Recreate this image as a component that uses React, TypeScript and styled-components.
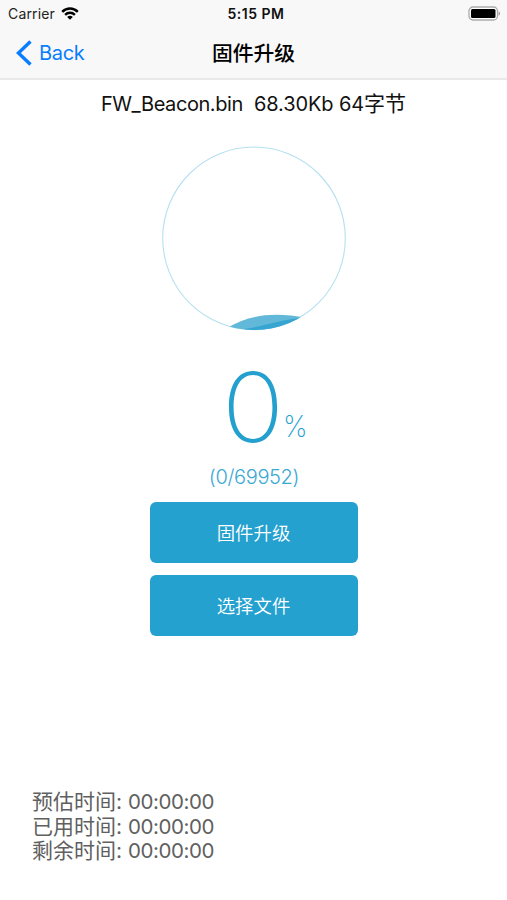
import React from "react";
import styled, { createGlobalStyle } from "styled-components";

const GlobalStyle = createGlobalStyle`
  * { box-sizing: border-box; }
  body {
    margin: 0;
    background: #fff;
    font-family: Inter, "Noto Sans CJK SC", sans-serif;
    color: #111;
  }
`;

const Screen = styled.div`
  width: 507px;
  height: 900px;
  display: flex;
  flex-direction: column;
  overflow: hidden;
  background: #fff;
`;

const Header = styled.header`
  height: 80px;
  flex: none;
  background: #f8f8f8;
  border-bottom: 2px solid #e9e9e9;
`;

const StatusBar = styled.div`
  height: 27px;
  display: grid;
  grid-template-columns: 1fr auto 1fr;
  align-items: center;
  padding: 0 6px 0 8px;
  font-size: 14px;
  line-height: 26px;
`;

const Carrier = styled.div`
  display: flex;
  align-items: center;
  gap: 6px;
  color: #222;
  letter-spacing: 0.15px;
`;

const Clock = styled.div`
  font-weight: 600;
  font-size: 14px;
  padding-left: 3px;
  letter-spacing: 0.5px;
`;

const BatteryIcon = styled.svg`
  justify-self: end;
`;

const NavBar = styled.nav`
  height: 51px;
  display: grid;
  grid-template-columns: 1fr auto 1fr;
  align-items: center;
  padding: 0 16px;
`;

const BackButton = styled.button`
  display: flex;
  align-items: center;
  gap: 6px;
  border: 0;
  padding: 0;
  background: none;
  color: #087dff;
  font: 400 20px/26px Inter, sans-serif;
  letter-spacing: -0.3px;
`;

const Title = styled.h1`
  margin: 0;
  padding-top: 2px;
  font-size: 20.8px;
  font-weight: 500;
  line-height: 28px;
  color: #000;
`;

const Main = styled.main`
  flex: 1;
  display: flex;
  flex-direction: column;
  align-items: center;
`;

const FileInfo = styled.div`
  margin-top: 10px;
  height: 28px;
  font-size: 20px;
  line-height: 28px;
  letter-spacing: -0.1px;
  white-space: pre;
`;

const FileName = styled.span`
  letter-spacing: -0.42px;
`;

const Unit = styled.span`
  font-size: 21px;
  letter-spacing: 0;
`;

const Gauge = styled.svg`
  margin-top: 28px;
  flex: none;
`;

const Percent = styled.div`
  display: flex;
  align-items: baseline;
  justify-content: center;
  height: 110px;
  margin-top: 21px;
  padding-left: 25px;
  line-height: 110px;
  color: #23a0cd;
`;

const PercentValue = styled.span`
  font-size: 96px;
  font-weight: 200;
  transform: scaleX(1.07);
`;

const PercentSign = styled.span`
  position: relative;
  top: -5px;
  font-size: 30px;
  font-weight: 200;
  transform: scaleX(0.92);
`;

const Bytes = styled.div`
  height: 28px;
  margin-top: 1px;
  padding-left: 1px;
  font-size: 20px;
  font-weight: 300;
  line-height: 28px;
  letter-spacing: -0.35px;
  color: #3ba9d2;
`;

const Actions = styled.div`
  display: flex;
  flex-direction: column;
  gap: 12px;
  margin-top: 11px;
`;

const ActionButton = styled.button`
  width: 208px;
  height: 61px;
  border: 0;
  border-radius: 6px;
  padding: 0;
  background: #24a1cf;
  color: #fff;
  font: 350 18.4px/28px Inter, "Noto Sans CJK SC", sans-serif;
`;

const Timings = styled.dl`
  align-self: flex-start;
  margin: auto 0 36px 32px;
  font-size: 20.5px;
  line-height: 24.6px;
  color: #606060;
`;

const TimingRow = styled.div`
  display: flex;
  align-items: baseline;
  height: 24.6px;
  gap: 6px;
`;

const TimingLabel = styled.dt`
  font-size: 21px;
  white-space: nowrap;
`;

const TimingValue = styled.dd`
  margin: 0;
  letter-spacing: -0.42px;
`;

const timings = [
  ["预估时间:", "00:00:00"],
  ["已用时间:", "00:00:00"],
  ["剩余时间:", "00:00:00"],
];

export default function App() {
  return (
    <Screen>
      <GlobalStyle />
      <Header>
        <StatusBar>
          <Carrier>
            <span>Carrier</span>
            <svg width="18" height="13" viewBox="0 0 18 13">
              <g fill="none" stroke="#000" strokeWidth="2.4">
                <path d="M1.2 4.9C5.6.4 12.4.4 16.8 4.9" />
                <path d="M4.1 7.8c2.8-2.7 7-2.7 9.8 0" />
              </g>
              <path d="M6.2 9.9c1.6-1.4 4-1.4 5.6 0L9 12.7z" />
            </svg>
          </Carrier>
          <Clock>5:15 PM</Clock>
          <BatteryIcon width="33" height="16" viewBox="0 0 33 16">
            <rect x="1" y="1" width="28.5" height="13" rx="4" fill="#fff" stroke="#aaa" strokeWidth="1.3" />
            <rect x="3" y="3" width="24.5" height="9" rx="1.5" />
            <path d="M30.6 5.2c1.9.8 1.9 3.8 0 4.6z" fill="#999" />
          </BatteryIcon>
        </StatusBar>
        <NavBar>
          <BackButton>
            <svg width="17" height="26" viewBox="0 0 17 26">
              <path d="M14.5 1.4 2.4 13l12.1 11.6" fill="none" stroke="#087dff" strokeWidth="3.4" />
            </svg>
            Back
          </BackButton>
          <Title>固件升级</Title>
        </NavBar>
      </Header>
      <Main>
        <FileInfo>
          <FileName>FW_Beacon.bin</FileName>
          {"  "}68.30Kb 64<Unit>字节</Unit>
        </FileInfo>
        <Gauge width="185" height="185" viewBox="0 0 185 185">
          <defs>
            <clipPath id="disc">
              <circle cx="93" cy="92.3" r="91.6" />
            </clipPath>
          </defs>
          <circle cx="93" cy="92.3" r="91.3" fill="none" stroke="#b5e0f1" strokeWidth="1.1" />
          <g clipPath="url(#disc)">
            <path d="M66 182C90 168 115 166 145 172V185H66z" fill="#61b8d9" />
            <path d="M84 183C108 179 119 174 139 172V185H84z" fill="#36a5d0" />
          </g>
        </Gauge>
        <Percent>
          <PercentValue>0</PercentValue>
          <PercentSign>%</PercentSign>
        </Percent>
        <Bytes>(0/69952)</Bytes>
        <Actions>
          <ActionButton>固件升级</ActionButton>
          <ActionButton>选择文件</ActionButton>
        </Actions>
        <Timings>
          {timings.map(([label, value]) => (
            <TimingRow key={label}>
              <TimingLabel>{label}</TimingLabel>
              <TimingValue>{value}</TimingValue>
            </TimingRow>
          ))}
        </Timings>
      </Main>
    </Screen>
  );
}
